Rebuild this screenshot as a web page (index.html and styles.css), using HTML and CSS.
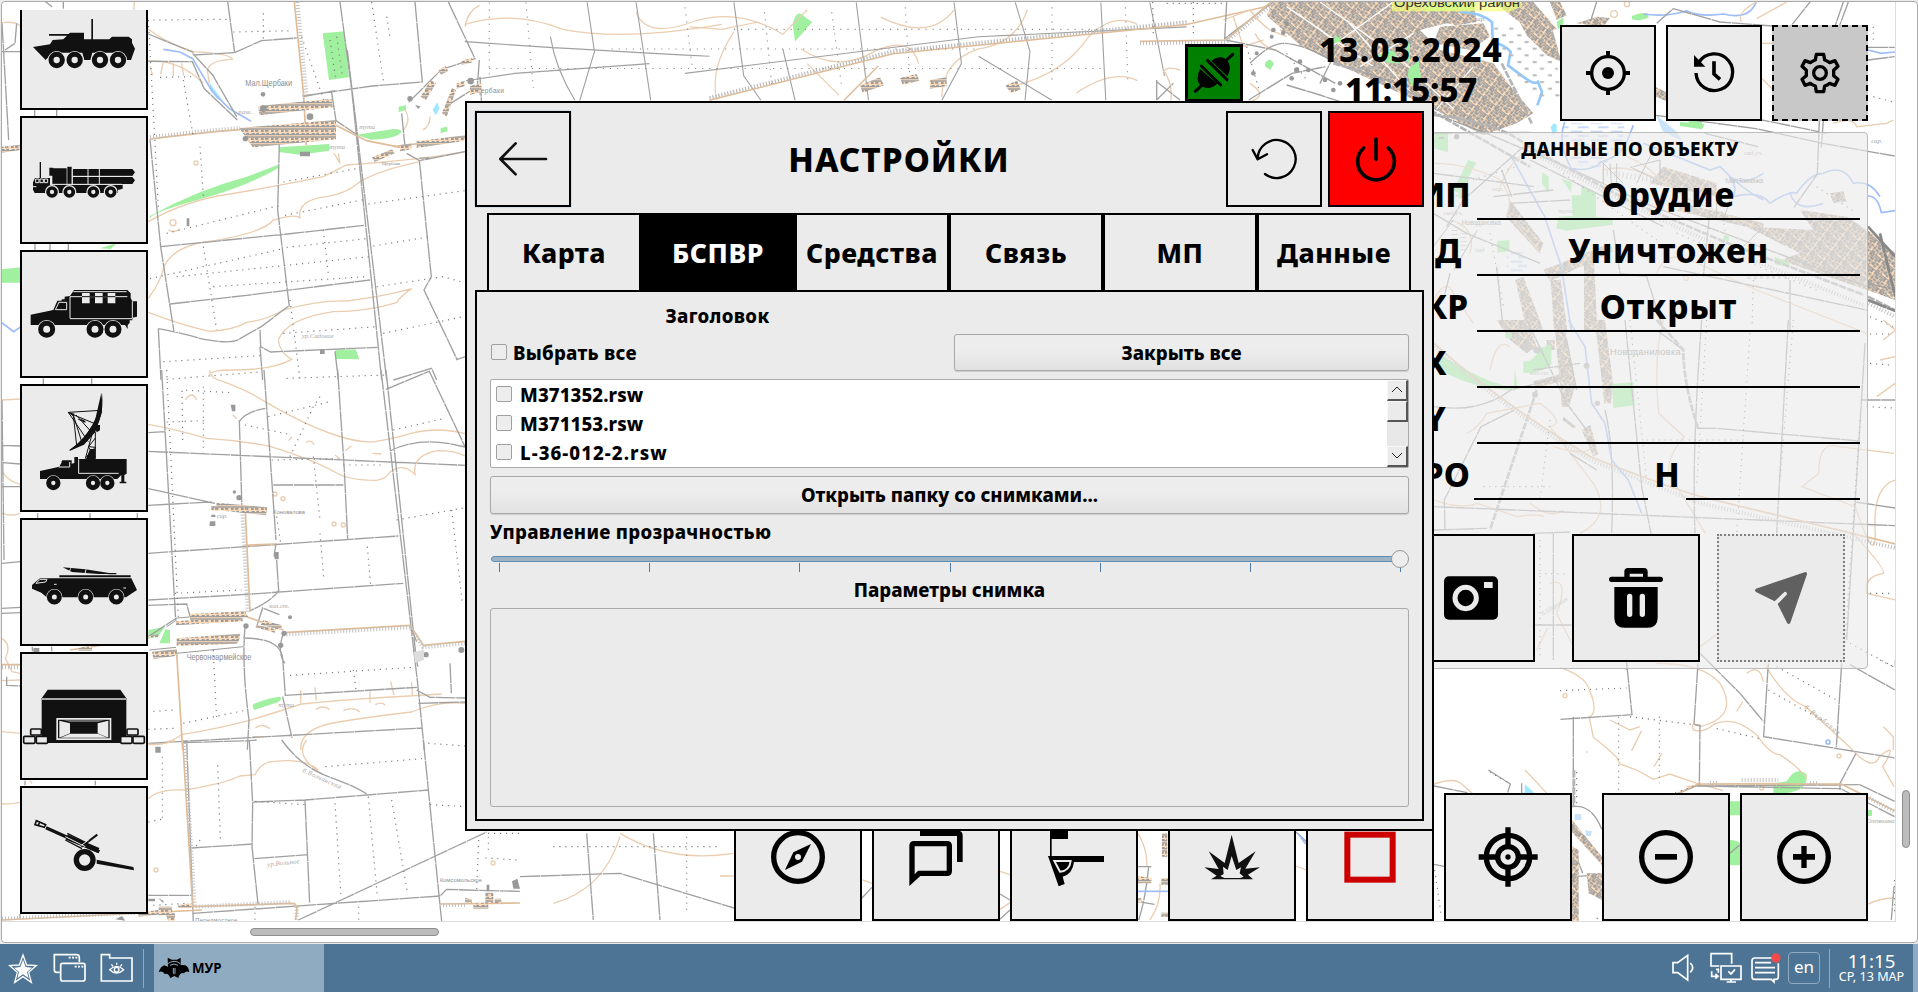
FILE: index.html
```html
<!DOCTYPE html>
<html lang="ru">
<head>
<meta charset="utf-8">
<title>МУР</title>
<link rel="stylesheet" href="styles.css">
</head>
<body>
<main class="window">
<div class="viewport">
<svg class="map" viewBox="0 0 1893 919" aria-hidden="true">
<defs>
<pattern id="houses" width="30" height="24" patternUnits="userSpaceOnUse"><rect width="30" height="24" fill="#ffddba"/><path d="M0 3h30M0 20h30" stroke="#a0a0a0" stroke-width="4"/><path d="M3 5h8v7h-8zM15 5h10v6h-10zM5 15h9v5h-9zM19 14h8v6h-8z" fill="#9b9b9b"/></pattern>
<pattern id="city" width="47" height="37" patternUnits="userSpaceOnUse" patternTransform="rotate(38)"><rect width="47" height="37" fill="#ffddba"/><path d="M2 3h9v9h-9zM13 2h5v9h-5zM20 4h13v6h-13zM4 14h6v5h-6zM12 13h11v7h-11zM26 12h9v6h-9zM2 20h7v9h-7zM11 22h11v7h-11zM25 21h9v10h-9zM10 8h6v5h-6zM36 2h8v12h-8zM37 17h9v7h-9zM36 26h7v8h-7zM3 31h12v5h-12zM19 31h4v6h-4z" fill="#9f9f9f"/><path d="M0 1h47M16 28h6M22 10v9M33 4v26" stroke="#a4a4a4" stroke-width="3"/></pattern>
<pattern id="marsh" width="60" height="26" patternUnits="userSpaceOnUse"><path d="M2 5h36M24 18h32" stroke="#c5d8f8" stroke-width="6"/></pattern>
<pattern id="orchard" width="46" height="40" patternUnits="userSpaceOnUse"><path d="M4 6h12M28 26h12" stroke="#bbb" stroke-width="7"/></pattern>
</defs>
<g transform="translate(-2 -2)">
<!-- north-west -->
<g transform="scale(.33333)">
<path class="wood" d="M968 100l65-6 14 138-60 8zM450 648Q590 570 740 530L835 494v10Q740 560 600 598T450 655zM838 442l150-10v20l-90 12-60-8zM1070 404l110-17q30 0 22 12-20 18-90 20zM1005 1051l62-3 11 30-70-1zM6 808l56-6v46H6zM1196 320l22-4v14l-22 6zM1322 384l20-4v14l-20 6zM300 745l50-16-18 18z"/>
<path class="water" d="M630 250l40 55-20-10-22-30zM1298 330l14-24 6 20-10 20z"/>
<path class="river" d="M490 148l50 8 38 20 30 50 30 50 50 50 65 38M1 965l40 30 22-15"/>
<path class="contour" d="M445 88Q500 130 580 155 690 160 697 178 630 180 622 210L628 250M445 182Q540 180 610 250M445 665Q560 600 690 582 850 555 970 530L1040 495Q1260 480 1395 455M445 895Q480 850 492 800 520 740 620 725 790 700 820 660 890 640 900 655 890 600 980 590 1040 580 1080 545 1140 510 1260 485M445 937Q560 980 630 994 700 990 740 967 800 960 850 930 960 900 1040 903 1150 890 1235 866 1200 890 1190 908 1100 935 1000 935 860 955 835 1020 840 1060 875 1078 820 1110 700 1110 630 1110 630 1125M403 6l-2 30M6 68q40-5 55 10M1395 80q10-50 44-64M450 200l8 26M490 188l-8 34M520 190v38M545 190l6 36M1002 460l18 30-5-30M1215 330q20 30-5 60M1290 350q0 30-22 40M505 690q20 10 35-3"/>
<circle class="contour" cx="588" cy="489" r="6"/><circle class="contour" cx="519" cy="668" r="9"/>
<path class="road" d="M683 6L704 158M580 165l124-7 80-36 106-8M445 102l135 55M445 184l132 1 35 80 100 95M578 160l60 65 72 125M1020 6l35 262 90 872M1042 150l118 990M1245 6l22 240-150 12-210 30M994 272l14 90 60 40M450 418l32 322 40 256M838 430l-5 200 35 290M482 740l380-38 230-26M510 912l230-26 370-46M475 986l8 154M475 986q80 15 120 28 90 20 120 5l70-40 80-60M780 990l2 50 30 16 320-14M780 1040l8 100M1005 1054l10 86M1258 480l36 350-22 40 100 210M1440 230l6 100M1345 6l80 170-100 32-100 100M1438 180l-6 80-80 50M1205 340l10 100M1258 475l30-2M1220 460l38 22L1395 455M1368 1080l28-10M1180 1140l115-35 15 35M6 155h55M6 70l20 350M130 0l26 20M190 0v26M104 330v20M170 330v20M105 730v20M150 730v20M205 730v20M130 1135v20M275 1135v20M50 70l-5 60-30 20M910 290l95-18"/>
<path class="track" d="M883 6l28 280M911 286l8 150M450 417q160-20 270-28M1000 372l100 50 100 20M1180 440l215-26"/>
<path class="ticks" d="M892 6l28 280M450 412q160-20 270-28"/>
<path class="dots" d="M460 60l220-2M700 96l180-4M480 232l100-2M550 240l30 170M790 40v90M1115 6l36 244M905 110l70 200M990 120l16 110M1010 110l16 110M445 60l30 560M600 440l10 150M850 546l230-42M855 646l240-48M500 700l340-84M610 740l40 250M970 690l16 140M450 836l400-90M860 742l240-26M530 830l580-60M640 860l460-30M1105 612l290-40M1120 738l170-28M1130 860l200-30 70 20M490 1085l290-18M870 900l30 240M850 1000l280-20M1150 1000l240-50M1160 50l10 60M860 1135l300-10"/>
<path fill="url(#houses)" d="M775 318l220-22 3 26-220 24zM718 384l290-24v58l-250 24zM1200 436l34-6v18l-34 6zM1250 424l145-18v16l-145 22zM1116 472l60-24 8 12-60 26zM1262 290l30-50 16 10-30 50zM1316 210l22-12 6 16-22 10zM1326 340l30-76 12 6-28 80zM1385 182l30-8v14l-30 6zM1370 250l24-8v16l-24 8zM6 440l55-6v16l-55 8z"/>
<g fill="#999"><circle cx="789" cy="283" r="7"/><circle cx="790" cy="326" r="10"/><circle cx="930" cy="350" r="10"/><circle cx="736" cy="416" r="8"/><circle cx="1230" cy="296" r="8"/><circle cx="1412" cy="243" r="10"/><path d="M1245 315l10 12 6-8M560 655h8v24h-8zM960 1048h14v14h-14zM900 455h30v14h-30z"/></g>
<text x="736" y="258" class="town" textLength="140" font-size="27" lengthAdjust="spacingAndGlyphs">Мал.Щербаки</text><text x="715" y="342" class="note">разв.</text><text x="1078" y="387" class="note">тута</text><text x="988" y="446" class="note">тута</text><text x="905" y="1013" class="note" textLength="97">ур.Садовое</text><text x="1146" y="494" class="town" font-size="13">Щербаки</text><text x="1422" y="279" class="town" font-size="20" textLength="90">Щербаки</text>
</g>
<!-- west -->
<g transform="translate(0 370) scale(.33333)">
<path class="wood" d="M445 780l50-10-20 28-30 8zM478 820l18-42 14 2v40zM760 1002q50-20 80-22 8 6-5 16l-72 24q-8-10-3-18z"/>
<path class="contour" d="M630 0q-5 22 40 35 80 30 125 60 120 70 210 100 70 24 120 20 60-10 105-24 80-22 165 0M445 163q80 14 175 42 100 6 190 24 130 40 200 80 40 22 120 22 30-5 40-25 40-30 75 8-10-60 70-72 50 0 80 16M6 90l55-3M6 305q20 30 55 38M6 430q30 10 55 0M6 805q30 20 10 60l20 40 25 5M6 932l55-2M6 1085l55 5M445 1124q60 0 100-30 120-20 200-42 80-24 160-50 100-10 220-18l200-12M1395 1000q-80-8-160 26-130 15-220 30-120 20-112 84M556 90q20-30 34 0M698 134l12 12M866 212l10-12M918 218q14-12 24 6M1036 242l18-14M1005 255l16 12M1118 250l26 2M902 960v40M945 952l4 40M1110 964v34M1172 935l10 40M1235 936l2 40M948 1018q20-14 40 0M1030 1022q30-14 50 4M1126 1004q20-10 30 2M766 1074q20-16 44 2M758 1100h34"/>
<circle class="contour" cx="825" cy="372" r="6"/><circle class="contour" cx="849" cy="386" r="6"/><circle class="contour" cx="1002" cy="462" r="6"/><circle class="contour" cx="1030" cy="465" r="6"/>
<path class="road" d="M485 0l42 750M718 150l8 270M792 0l36 510M718 155q20-30 78-40M1013 0l20 300 10 206M1143 0l110 940 20 200M1158 0l90 860M445 188l50-3M445 244l950 42M445 356l200 44M445 406l190-10M445 550l750-52M445 690l280-16 485-34M445 706l115-4 10 36M820 345h210M828 520l-6 40M830 570l6 92q-20 30-85 60M1158 58l130-54L1395 230M1170 243q80-40 180-22l45 10M735 770q-10 120 12 280l-5 90M730 804q110 0 118 60l8 112 395-24M848 980l28 124M850 790q-20 60 5 90M445 1120l820-46M770 770l18-56 50 20M1230 765l20 50M1240 840l14 50M1350 880l4 90M1250 960l40 22 105 2M1255 1000l140-4M6 226l55 2M6 278l55 4M6 350l55 0M6 580l55-5M6 715l55-3M6 730l55-2M20 920v26l40 2M113 430v14M270 430v14M412 430v14M97 830v14M155 830v14M6 90l6 480M445 800l85-56"/>
<path class="track" d="M736 425l14 300M736 526l90-4M850 788l380-22 40 60 125-12M530 850l18 290M740 740l110 40M6 884h55M210 840l235-36"/>
<path class="ticks" d="M727 425l16 300M850 794l380-22 40 60 125-12M6 892h55"/>
<path class="thin" d="M530 744l200-16M500 770l30-20M530 850l200-20M448 840l80-8"/>
<path class="dots" d="M500 28l280-22M500 156l120-4M548 210l-2-150 150 8M610 50v200M805 140l180-44M870 260l70-150 20-30M735 165l140 30M940 260l20 190M830 440l12 80M1030 285l120 0M1180 180l150-34M960 490l12 140M1102 530l10 120M1355 420l32 280M1190 450l200-36M525 670l200-10M640 840l10 210M870 916l370-24M1060 900l8 60M460 1024l60-4M550 1060l190-40M445 1078l80-3M815 270l200-4M500 0l35 740"/>
<path fill="url(#houses)" d="M650 398l152 14-4 24-150-16zM634 408h20v14h-20zM570 732l165-8 10 18-175 8zM528 754l200-14v14l-200 12zM530 805l190-14v16l-10 14-180 6zM790 750l56 16-4 14-60-16zM770 764l58 14-4 10-58-16zM456 845l75-8v20l-70 10zM236 834l40-8v16h-40zM445 798l30-6v10h-30z"/>
<g fill="#999"><circle cx="717" cy="383" r="8"/><circle cx="703" cy="366" r="5"/><circle cx="738" cy="768" r="8"/><circle cx="852" cy="790" r="8"/><circle cx="842" cy="826" r="8"/><circle cx="870" cy="742" r="6"/><circle cx="1278" cy="854" r="8"/><circle cx="1384" cy="840" r="9"/><path d="M692 104h14v20h-10zM634 434h12v7h-12zM630 454h16v14h-18zM822 546h14v22h-12zM100 834h18v12h-18z"/><path fill="#ddd" d="M1242 845l30-5v30l-28 10z"/></g>
<text x="820" y="431" class="town" font-size="17" textLength="95">Коновалова</text><text x="560" y="869" class="town" textLength="194" font-size="27" lengthAdjust="spacingAndGlyphs">Червоноармейское</text><text x="650" y="445" class="note">сар.</text><text x="808" y="713" class="note">кол.ст.</text><text x="835" y="1010" class="note">тута</text>
</g>
<!-- south-west -->
<g transform="translate(0 740) scale(.33333)">
<path class="contour" d="M6 192q40 0 55-6M445 176q30-30 110-26 120-20 165-42l45-4q20-40 60-40 90-10 130 26M920 0q-40 50 50 104M90 122l6 8M445 12q30 6 80-10"/>
<path class="road" d="M548 8l200-6 22-2M748 0l10 190-2 130 18 172M845 0q50 70 125 104 100 36 130 58M1270 0l55 545M760 186l155-6 370-30M915 180l14 310M763 356l160-12M575 324l185-12M895 540L1460 276M580 520l740-52 20-20 60 2 160 4M560 0l20 545M445 466h130M60 522v14M286 122v14M75 122v14"/>
<path class="track" d="M548 0l30 500 300-10q20 0 8 50M6 540l600-30M1320 492l240-3"/>
<path class="ticks" d="M554 0l30 500 290-14M6 536l400-18M1320 496l80-2M890 500v40"/>
<path class="dots" d="M487 50v190M445 246l40-8M653 76l8 220M600 300l-12 20M1005 190l18 280M1105 170l26 290M1175 180l46 270M976 80l290-24M1285 10l110 8M1290 194l110 6M766 184l150 10M1465 290v50M1436 300l-6 150M1456 354l100 6M1464 280h96M1076 500v40M765 500v40M460 496l100-6"/>
<path fill="url(#houses)" d="M415 518l60-8v14l-60 6zM476 500h40v26h-40zM535 494l40-4v14h-40zM495 520h30v22h-20zM1395 474l20 4v12l-20-4zM1420 490h45v16h-45zM1456 458h24v30h-24zM1484 476h20v14h-20z"/>
<circle class="contour" cx="468" cy="390" r="6"/><circle class="contour" cx="1479" cy="369" r="6"/>
<path fill="#999" d="M466 20h16v18h-16zM445 476h20v8h-20zM474 474l16 8v8zM1536 424l16-8 8 30h-20zM1460 434h8v20h-8zM346 538l20-10 10 14z"/>
<text class="note" transform="translate(906 96) rotate(24)" textLength="125">б.Волчанская</text><text class="note" transform="translate(802 380) rotate(-6)" textLength="98">ур.Вольное</text><text x="1320" y="425" class="town" font-size="17" textLength="126">Комсомольское</text><text x="586" y="547" class="town" font-size="17" textLength="126">Передмостное</text>
</g>
<!-- north -->
<g transform="scale(1.2232)">
<path class="wood" d="M648 20q3-14 10-6l6 4-14 16zM386 86l10 2-2 6-8-2z"/>
<path class="c2" d="M380 20q40-12 80 4 50 10 130-4M520 10q8 20 40 10 40-16 80 8l20-20M600 26q-20 30-14 56M655 40q30 20 60 2 30-14 36 10M660 52l26 26M720 14q40 20 60-6M770 80q0-30 30-40 30-4 40-32M830 70q40-10 60-40 20-20 40-10M880 76q30-20 50-10M620 18l-30 6-26-2"/>
<path class="r2" d="M380 34q80 6 200 12M480 2l6 40-12 40M520 2l12 80M600 2l8 60 14 20M640 40l10 42M700 2l10 80M780 2l6 50-16 30M830 2l12 40-4 40M900 2l4 80M940 2l12 60M560 60l240-30 170-8M450 30q4 26 20 52M800 46l60 36M381 66l40-6 110-8"/>
<path class="t2" d="M580 82L730 44l240-24 80-18M690 82l28-28"/>
<path class="k2" d="M580 80L730 42l240-24"/>
<path class="d2" d="M400 2v60M430 2l6 70M560 6l6 50M625 10l6 60M680 10l8 60M740 6l4 60M860 6v60M920 6l2 60M500 40h300M400 56h500M600 24h300"/>
</g>
<path fill="url(#houses)" transform="scale(.33333)" d="M2580 256l60-24 12 24-64 22zM2700 234l50-12 8 20-50 12zM2790 240l50-8v26l-50 8zM3016 256l36-14 10 26-30 12zM1410 258l34-8v26l-34 8z"/>
<!-- north-east town -->
<g transform="translate(1140 0) scale(.33333)">
<path fill="url(#city)" d="M400 6H1000l10 60-60 10-30-6-80 20 60 60 160 40 60 80 60 70-50 30-100 36-150-80-280-130-120-60-100-90z"/>
<path fill="url(#city)" d="M1060 6h120l70 80-40 20-60-30-50-40zM900 80l130-10 20 40-60 40-110-20z"/>
<path fill="none" stroke="#fff" stroke-width="4" d="M540 6l240 170 160 150M440 20l260 180M620 60l300 340M1000 200l-130 150M820 100l-160 100M760 6l-180 130"/>
<path class="wood" d="M586 104l24 20-30 6zM806 206l30-24 8 60-30 16-10-30zM710 165l50-14 20 40-40-4zM376 188q14-20 26 4l-12 18-16-12zM800 128l10 4v60l-10-10zM884 400h40v56l-40-10zM985 480l24 8-50 90-20-6z"/>
<path fill="#a0f0a0" d="M840 18l160-12v24l-140 4z"/>
<path class="contour" d="M70 216q10-20 50-6M250 60l80-30q30 40 60 60l50 20M280 50l30 90 60-20M345 100q20 40 60 50M70 210q30 40 22 100M330 250q60 40-4 56M410 70l40 10M420 90l30 6"/>
<path class="road" d="M260 6l-6 110L400 6M256 120l150 30 180 100M330 190q60-60 100-60 60 0 160 60l180 60 120 80M50 240v60l50-50M50 245L120 300M326 300l130-80 100-20M440 255l100 30 60 20M540 250l50-100M880 400l290-3"/>
<path class="road wide" d="M580 190l70 20 60-10M870 330l300 170"/>
<path class="track" d="M0 124l258-4L400 0"/><path class="ticks" d="M0 130l258-4L404 6"/>
<path class="river main" d="M960 36q60 0 96 30l2 60q40 10 54 30l-8 40 40 30q40 30 50 20l12 30-14 40"/>
<path fill="url(#orchard)" d="M1060 80h130l110 220h-110l-80-100z"/>
<g fill="#999"><circle cx="400" cy="90" r="7"/><circle cx="430" cy="98" r="7"/><circle cx="395" cy="110" r="6"/><circle cx="440" cy="72" r="7"/><circle cx="480" cy="185" r="7"/><circle cx="470" cy="210" r="8"/><circle cx="505" cy="210" r="7"/><circle cx="455" cy="235" r="7"/><circle cx="350" cy="160" r="6"/><circle cx="340" cy="220" r="7"/><circle cx="580" cy="270" r="7"/><circle cx="600" cy="250" r="7"/><circle cx="555" cy="240" r="7"/><circle cx="905" cy="420" r="10"/><circle cx="950" cy="410" r="8"/></g>
<path class="dots" d="M38 6l2 100M160 6v100M80 10h180M320 140l40 140M440 160l60 80"/>
<rect x="756" y="0" width="390" height="34" fill="#f4ff7a" opacity=".7"/><text x="762" y="20" font-size="40" class="district" textLength="378" lengthAdjust="spacingAndGlyphs">Ореховский район</text>
</g>
<g transform="translate(1430 0) scale(.33333)">
<path fill="url(#city)" d="M250 30l60-24 60 90 24 90-44-20-60-60zM360 6h30l20 40-30 14zM440 70l60-20 40 4-20 26zM678 262l120 56-4 22-116-50zM1312 690l84 70v140l-84-30zM700 500l160 50v40l-200-40zM1110 630l140 20 60 40v180l-260-90 60-20-160-80 200 10zM1200 580l40-6 10 30-40 6zM256 840l24-10 60 160h-50zM340 810l200-80 10 24-190 90zM462 780h30l10 210h-40zM362 840h30l20 150h-40zM240 600l100 130-12 30-100-110zM760 610l240 60v22l-260-60z"/>
<path class="wood" d="M606 48q50-20 50 4-20 14-50 6zM380 66l20-14v20l-16 16zM750 366l74 6-8 16-66-10zM336 516l20 14v50l-20-30zM394 536l30 10v40h30v-30l44 20v74l50 4v20l-140 18-30-8 10-34 40-2-4-70zM202 724l36-4v34l-36 4zM1034 770l44 18v14l-44-10zM110 490l24-4-40 110-12-6zM12 416h36v36l-36-10zM776 362h40v18h-40zM880 708h16v14h-16z"/>
<path class="water pale" d="M678 344l60 50 20 30-60-30z"/><path class="water" d="M362 380l10-10 8 4v20l-12 12z"/>
<path fill="url(#marsh)" d="M404 370h180l-10 90-80 50-70-20-30-60zM230 755h60v60h-60z"/>
<path class="river" d="M404 366q-24 60 20 140 60 10 90-20 60-20 76-60l20-50M640 430q100 40 200 80l30-10q60 50 40 90 80-20 110 20 60-40 80-30 40-60 80-60 60-30 90 30 50-10 80 40M880 510q60 60 120 90M1000 520q-60 40-100 10M640 42q70 10 130-10 40 20 110 10 80 20 100-40M1314 150l40 10 42-4M1080 580q20 60 100 30M244 470l100 180 50 150 30 190M1314 588q30 0 40 50l42-6"/>
<path class="contour" d="M980 6q-60 30-46 60M1070 6l-90 50M996 130h60M996 236l40 40M1210 370q60-20 70 10l90-10 20-10M12 490q100 0 200 50 40 60 20 100l100 120M520 510q100-30 260 90l200 80M680 820q30-70 100-40l200 90 330 130M10 900q40-70 60-20l60 90M590 470q60 20 120 90M60 660q80 20 60 100M210 560q30-70 60-90"/>
<circle class="contour" cx="552" cy="42" r="10"/><circle class="contour" cx="591" cy="12" r="8"/><circle class="contour" cx="768" cy="834" r="7"/>
<path class="road" d="M680 70l50-44 140 40 210 16 60-76M1255 6l-26 70M1240 6l-24 70M1314 142h80M1314 180l80-10M678 346l300 40 200 44 216 38M824 400l160 40M1168 362l-6 160-70 100M1180 362l-6 80M10 340l160 60 260 110 240 110 240 90 400 150M10 640l100 60 220 90M12 520l300 40M370 570l-180 20M50 680l50-80 180-160M215 510l30 80M550 690l20 130 80 10 50 160M840 630l-20 200M1080 840v150M60 820l-20 80M200 800l20 190M700 800l610 130M300 480l400 200M420 600l-180 10M520 490v60M690 480v60M500 6l-16 50M900 340l290 60M1314 850l80 20"/>
<path class="road wide" d="M12 345q200 20 290 100l300 160 280 120 420 160M1314 890l80 40M215 190q70 140 90 180"/>
<path class="road dark" d="M1314 900l84 34M1314 680l82 90M1350 700l46 190"/>
<path class="ticks" d="M300 455l300 160 280 130 420 170M1316 910l80 40"/>
<path class="thin" d="M520 490l60 60M600 500l80 40M690 480l-80 20M540 490l4 60M560 490v60M620 550l50-100M10 740l60-80M72 810l70-120M860 590v60M900 600l-20 60M1000 680l-60 60"/>
<path class="dots" d="M970 840l-4 140M1160 560l120 80M870 600l20 120M1330 290l60 16M1330 80v40M400 520l280 200M560 300h100M60 560l200-60M60 580l60 20M1320 950l70 30M740 700l420 170M180 700l40 220"/>
<path fill="none" stroke="#c4c4c4" stroke-width="18" stroke-dasharray="3 9" d="M530 520l160 20M74 690v60M100 700v60"/>
<text x="942" y="465" class="note">сад.уч.</text><text x="886" y="549" class="town" font-size="22" textLength="114">Мал.Токмачка</text><text x="385" y="640" class="note">тута</text><text x="95" y="675" class="town" font-size="20" textLength="118">Новодановка</text><text x="42" y="645" class="note">сад.уч.</text><text x="187" y="574" class="note">сар.</text><text x="1324" y="430" class="note">сар.</text><text x="950" y="836" class="town" font-size="15" textLength="120">Орловка</text><text x="135" y="756" class="note">сад</text><text x="132" y="62" class="note">пар.</text>
</g>
<!-- east -->
<g transform="translate(1400 320) scale(.33333)">
<path fill="url(#city)" d="M290 0h90l30 80-30 20-50-40zM462 0h28l36 200-20 60h-20zM555 0h60l24 190-6 60h-20l-26-230zM440 60h24v30h-24zM400 184l94-24 4 20-90 24zM545 330l26-16 24 90-16 4zM490 290l38 30-6 6-34-26z"/>
<path class="wood" d="M102 120l30-10q80 50 140 74l70 22 4 6q-140-10-220-60zM370 124q30 4 50-40l34-10v60q-40 30-84 24zM344 140l8 60-10 4zM636 192l64-6 4 70-64 8zM316 40h20v14h-20z"/>
<path class="contour" d="M790 0q-30 100-14 280l76 70q-50 60-46 110 80 130 110 180M102 540q80 30 130 10l120 40q60-10 80 0M200 340q40-20 60-60l160-30q80 60 30 70l130 170q60 100-40 150M270 150q20-100 60-70M460 380q100 30 120 0M450 790q60-20 20 90l60 120M1486 480q-70 20-60 160 0 100-60-80l-160-60 50-40q0-100 60-80l166 20M1360 640q100 110 90 120-60 10-50 60l86 20M1450 60l36-30M1430 230l56-40M1450 0l36 30M900 980l80-60M1440 120l46-10M410 990q40-80 30-60M390 550q60 50 100 20"/>
<path class="road" d="M675 0l50 500 40 200M905 0q-30 400-20 640M1165 0l-35 640M1395 70L1340 960M380 0l120 250 60 80M102 260q140 20 230-50l160-40M460 0l40 60 30 150M102 560l1384 57M890 325l60 0 430 38M1365 546l120 18M1382 240h104M615 270q30 120 20 370M510 400l80 50M102 630l160-5M400 640l110-4M460 640v380M135 630l-2-90 110-220 100-50M400 150l140-20M770 30l80 60M680 1050v-30M900 1000l50 50M405 915h110M1486 1020v20"/>
<path class="road wide" d="M770 0l80 90q0 100 44 234M410 210q-60 180-140 420"/>
<path class="track" d="M102 70q200 180 470 340 200 80 330 120l584 142"/><path class="ticks" d="M102 80q200 180 470 340 200 80 330 130l584 134"/>
<path class="river" d="M505 0l50 80 20 170 40 60 20 110 50 60 40 100"/>
<path class="dots" d="M690 0l50 480M1050 40l-40 600M920 0l-30 500M1180 0l-40 480M450 300l-30 240M250 500l200 0M1410 130l70 6M1400 260l80 4M1380 300l-46 680M1140 700l10 300M740 360l300 0M420 660v360M400 760l100 2M950 790v60M1410 820h70M1350 970l130 70M1410 42h70"/>
<g fill="#b0b0b0"><circle cx="374" cy="80" r="12"/><circle cx="410" cy="90" r="10"/><circle cx="592" cy="250" r="8"/><circle cx="560" cy="137" r="9"/><circle cx="405" cy="224" r="9"/></g>
<text x="630" y="106" class="town" font-size="28" textLength="212">Новоданиловка</text><text class="note" transform="translate(428 888) rotate(-32)" textLength="90">б.Широкая</text><text x="390" y="166" class="note">кол.ст.</text>
</g>
<!-- south-east -->
<g transform="translate(1560 660) scale(.33333)">
<path class="wood" d="M640 400v-30l40-6q30-50 60-20 6 50-70 56zM510 424h30v42h-30zM510 540q20 0 30 10v66h-30zM924 450h12v18h-12z"/>
<path class="contour" d="M0 22q60 20 80 50 40 80 8 100l12 60q40 30 70 60l10 20 50 18 50 28 50-16 80 28 80 22M290 10q140 0 190 60 60 100-60 130-30-20-20 10 30 10 60-16 60-30 130 30 40 60 70 60 60 40 80 72M380 380q70-10 250-10l210 6M560 40q40-30 50 26M618 20q60 100 120 120l130 120q70 80 90 30 60-50 10 30l34 60M530 154l18-28M282 320l24-40M970 200l30 30v40M920 734q40-20 80-20M150 180l60 30 30-10M245 212l-30 60"/>
<circle class="contour" cx="15" cy="107" r="6"/><circle class="contour" cx="837" cy="288" r="6"/><circle class="contour" cx="605" cy="384" r="6"/>
<path class="road" d="M200 10l16 154L0 178M414 10l-12 184 18 2-2 180M625 10l-14 220 395 64M440 0l100 100 70 84M845 10l-16 252M870 14l135 76M40 170v270M412 378l430 8 162 84M345 404l64-26 490-4 105 50M888 280l-48 90v20M1002 680l-8 100M510 580l28-24M36 440q60-10 90 70M38 560l30 80M38 650l80-5"/>
<path class="track" d="M350 402l64-30 430 0 160 80"/><path class="ticks" d="M545 360h110M750 370h25M450 369h25M920 410l84 46"/>
<path class="dots" d="M0 92l200-8M176 170v220M298 170v200M210 170l190 24M470 206l130 30M80 276h2M625 90l160 90M650 20l180 100M1004 660v100M110 775h10M400 380l-60 20M960 0l40 20"/>
<path fill="url(#city)" d="M36 480l90 110v26l-90-100zM80 640h46v80l-40-20zM36 560l20 10v212h-20z"/>
<path class="water pale" d="M44 462h20v18h-20zM76 510l20 4-4 14h-14z"/><circle cx="804" cy="246" r="6" class="river"/>
<text class="note" transform="translate(732 144) rotate(38)" font-size="22" textLength="130">б.Вербовая</text><text x="920" y="490" class="note" textLength="84">Оленковка</text>
</g>
<g transform="translate(1160 770) scale(.33333)">
<path class="contour" d="M822 42q60-20 80-2l40 34M1095 0l66 70M408 288l30 12"/><path class="road" d="M822 48l100 20M985 0l66 42-8 26M1085 40v30M822 283l30 6M408 186l30 28"/><path class="water" d="M1094 42l30 28h-30z"/><path class="river" d="M415 192l22 30"/><path class="dots" d="M824 300l20 140M990 6l60 36M1250 6v100"/><path class="road wide" d="M1242 0v110"/>
</g>
<g transform="translate(720 770) scale(.33333)">
<path class="contour" d="M-300 190q150 90 340 60M-500 400q150-40 200-200M0 318h42M428 330l28 10M840 304l30 10M840 418l30-20M1254 190q30 50 26 100M1320 340q4 60-30 110"/><path class="road" d="M-600 320l300-10 342 104M-400 190l20 260M-200 190l20 260M426 384l30-32M840 372l30 18M840 448l30-28M1256 450q20-60 30-160M1254 395l50 8M1254 290h40"/><path fill="url(#houses)" d="M1254 318l40 6v16h-40zM1324 324h20v20h-20zM1324 428h20v12h-20zM1254 384h10v14h-10zM1326 190h16v70h-16z"/><path class="river" d="M1254 364h90"/><path class="dots" d="M-500 230h500M-100 200v230"/>
</g>
</g>
</svg>

<aside class="units">
<button class="tile"><svg viewBox="66 -48 372 372"><path d="M99 141l51-8 8-13 32-2 20-20h42v20h76l8-8h50l10 8v10l9 18-12 34h-16l-20-22h-80l-6 22h-18l-6-22h-90l-20 22zM147 102h60v5h-60zM274 57h5v62h-5z"/><g class="wheels"><circle cx="170" cy="180" r="21"/><circle cx="224" cy="180" r="21"/><circle cx="300" cy="180" r="21"/><circle cx="354" cy="180" r="21"/></g><g class="rims"><circle cx="170" cy="180" r="17"/><circle cx="224" cy="180" r="17"/><circle cx="300" cy="180" r="17"/><circle cx="354" cy="180" r="17"/></g></svg></button>
<button class="tile"><svg viewBox="66 354 372 372"><path d="M157 505h43v48h-43zM148 503h12v24h-12zM202 500h13v53h-13zM217 507h180l8 10-8 11H217zM217 531h180l8 10-8 11H217zM105 534h45v20h218v12l-14 4v9H104l-5-10v-22zM119 486h4v48h-4z"/><path class="cut" d="M107 548v-11h10v11zM120 548v-11h10v11zM133 548v-11h10v11zM99 560h10M217 529h180M264 507v45M298 507v45M217 507v46M150 553h216"/><g class="wheels"><circle cx="156" cy="576" r="15"/><circle cx="208" cy="576" r="15"/><circle cx="280" cy="576" r="15"/><circle cx="332" cy="576" r="15"/></g><g class="rims small"><circle cx="156" cy="576" r="12"/><circle cx="208" cy="576" r="12"/><circle cx="280" cy="576" r="12"/><circle cx="332" cy="576" r="12"/></g></svg></button>
<button class="tile"><svg viewBox="66 756 372 372"><path d="M92 944l68-14 12-28h12l2-4h8v-8l16-2 12-18h160l10 10v14l5 10h14v46l-14 3v8h-8v8l-6 6v12l-8-12H92z"/><path class="cut" d="M176 907h24v22h-34l8-16zM210 955V890h172M210 956h186M397 904v50M220 875h160"/><path fill="#ebebeb" d="M246 879h23v31h-23zM285 879h23v31h-23zM323 879h23v31h-23z"/><path stroke="#111" stroke-width="3" d="M246 890h100"/><g class="wheels"><circle cx="140" cy="988" r="22"/><circle cx="285" cy="988" r="22"/><circle cx="339" cy="988" r="22"/></g><g class="rims"><circle cx="140" cy="988" r="18"/><circle cx="285" cy="988" r="18"/><circle cx="339" cy="988" r="18"/></g></svg></button>
<button class="tile"><svg viewBox="66 48 372 372"><path d="M120 303l55-12 12-20h28v10l8-2v-18h11v6h24l12-30h16v30h94v44l-7 4v20h6v5h-20v-5h5v-20l-12 12H120zM306 68q10 90-50 150l-48 24q90-70 98-174zM282 165h18v16l-10 6z"/><path class="cut" d="M184 276l-8 15h33v-15M236 268v42h120"/><g fill="none" stroke="#111" stroke-width="3"><path d="M205 127l99-6M205 127l60 88M220 135l10 92M220 135l25 80M228 135l50 55M222 135l72 30M256 266l22-80M286 266v-80M258 262l28-30-20-2 20-26M286 262l-20-30M205 128l18 8M235 148l22 8"/></g><path d="M304 68l-20 88-34 52-42 32 2 2 42-18 34-38 20-60zM204 126l20 5-5 8zM240 145l16 8-4 6z"/><g class="wheels"><circle cx="160" cy="339" r="17"/><circle cx="279" cy="339" r="17"/><circle cx="322" cy="339" r="17"/></g><g class="rims"><circle cx="160" cy="339" r="14"/><circle cx="279" cy="339" r="14"/><circle cx="322" cy="339" r="14"/></g></svg></button>
<button class="tile"><svg viewBox="66 450 372 372"><path d="M96 645l24-20h274l17 35-33 22H140l-16-14-28-12zM178 616h214v6H178zM188 592l68 6 90 14h-50l-80-6zM325 609h24v4h-24z"/><path class="cut" d="M108 640l12-12h21l-4 8zM212 595l-4 10M258 598l-3 14M162 643h8M370 654h8"/><g class="wheels"><circle cx="163" cy="681" r="18"/><circle cx="257" cy="681" r="18"/><circle cx="349" cy="681" r="18"/></g><g class="rims"><circle cx="163" cy="681" r="15"/><circle cx="257" cy="681" r="15"/><circle cx="349" cy="681" r="15"/></g></svg></button>
<button class="tile"><svg viewBox="66 852 372 372"><path d="M143 959h218l18 26v134H125V985z"/><path fill="#aaa" d="M125 984h254v6H125z"/><path fill="#ebebeb" d="M169 1044h165v66H169z"/><path d="M174 1049h155v56H174z"/><path fill="#ebebeb" d="M178 1052l32 8v30l-32 13zM325 1052l-32 8v30l32 13zM182 1103l28-12h84l28 12z"/><path fill="#666" d="M190 1050h124l-20 6h-84z"/><g fill="#ebebeb" stroke="#111" stroke-width="5"><rect x="92" y="1077" width="32" height="18" rx="3"/><rect x="71" y="1099" width="34" height="21" rx="3"/><rect x="109" y="1099" width="34" height="21" rx="3"/><rect x="381" y="1077" width="33" height="18" rx="3"/><rect x="362" y="1099" width="34" height="21" rx="3"/><rect x="399" y="1099" width="34" height="21" rx="3"/></g></svg></button>
<button class="tile"><svg viewBox="66 144 372 372"><g fill="none" stroke="#111"><path stroke-width="10" d="M138 263l160 72"/><path stroke-width="16" d="M200 291l95 40"/><path stroke-width="4" d="M202 280l60 30M196 300l50 26"/><path stroke-width="6" d="M244 320l48-36"/><path stroke-width="5" d="M109 242l-4 12 28 8 4-8zM119 246l-4 10"/></g><path stroke="#ebebeb" stroke-width="3" fill="none" d="M196 290l60 30M244 316l24-18"/><path d="M290 359l110 22 2 10-112-20z"/><circle cx="254" cy="360" r="25" fill="#ebebeb" stroke="#111" stroke-width="16"/></svg></button>
</aside>

<div class="status"><div class="link"><svg viewBox="144 141 156 156"><g stroke="#000" stroke-width="9" fill="none" stroke-linecap="round"><path d="M166 274l30-28M278 163l-30 28M184 198l58 57M203 182l58 57"/></g><path d="M180 207q-16 34 2 50 26 16 50-6zM214 183q26-20 46-4 18 22 2 50z"/></svg></div><div class="clock"><span class="clock-date">13.03.2024</span><span class="clock-time">11:15:57</span></div></div>

<nav class="tools">
<button class="tool"><svg viewBox="396 81 276 276"><circle cx="534" cy="219" r="49" fill="none" stroke="#000" stroke-width="10"/><circle cx="534" cy="219" r="18"/><path d="M528 153h12v16h-12zM528 269h12v16h-12zM468 213h16v12h-16zM584 213h16v12h-16z"/></svg></button>
<button class="tool"><svg viewBox="714 81 276 276"><path d="M806 188A55 55 0 1 1 798 219" fill="none" stroke="#000" stroke-width="10"/><path d="M792 165l34 35h-34z"/><path d="M852 184v38l18 16" fill="none" stroke="#000" stroke-width="11"/></svg></button>
<button class="tool tool-active"><svg viewBox="1032 81 276 276"><g fill="none" stroke="#000" stroke-width="10" stroke-linejoin="round"><circle cx="1170" cy="219" r="19"/><path d="M1159 163h22l3 17q8 3 15 8l16-6 9 17-13 12v16l13 11-9 18-16-6q-7 6-15 8l-3 17h-22l-3-17q-8-3-15-8l-16 6-9-18 13-11v-16l-13-12 9-17 16 6q7-5 15-8z"/></g></svg></button>
</nav>

<section class="object">
<h2>ДАННЫЕ ПО ОБЪЕКТУ</h2>
<dl>
<dt>ТИП</dt><dd>Орудие</dd>
<dt>ИД</dt><dd>Уничтожен</dd>
<dt>УКР</dt><dd>Открыт</dd>
<dt>X</dt><dd></dd>
<dt>Y</dt><dd></dd>
</dl>
<div class="pair"><span class="lbl">ПРО</span><span class="field"></span><span class="mid">H</span><span class="field"></span></div>
<div class="actions">
<button class="tile"><svg viewBox="27 648 372 372"><rect x="132" y="769" width="162" height="130" rx="15"/><rect x="252" y="786" width="26" height="18" fill="#ebebeb"/><circle cx="197" cy="834" r="32" fill="#000" stroke="#ebebeb" stroke-width="15"/></svg></button>
<button class="tile"><svg viewBox="522 648 372 372"><path d="M635 770h38v-15q0-11 11-11h48q11 0 11 11v15h38q8 0 8 8t-8 8H635q-8 0-8-8t8-8zm54 0h40v-9h-40zM643 801h130v92q0 30-30 30h-70q-30 0-30-30z" fill-rule="evenodd"/><path stroke="#ebebeb" stroke-width="16" stroke-linecap="round" d="M689 829v54M727 829v54"/></svg></button>
<button class="tile tile-off"><svg viewBox="957 648 372 372"><path fill="#606060" d="M1216 756q6 0 5 7l-50 145q-5 8-10 0l-28-56 27-28q3-8-6-9l-30 29-56-28q-6-5 0-10z"/></svg></button>
</div>
</section>

<div class="bottom">
<button class="tile"><svg viewBox="48 75 372 372"><circle cx="234" cy="261" r="73" fill="none" stroke="#000" stroke-width="16"/><path d="M273 222l-27 53-51 25 25-53z"/><circle cx="234" cy="261" r="9" fill="#ebebeb"/></svg></button>
<button class="tile"><svg viewBox="462 75 372 372"><path fill-rule="evenodd" d="M582 213h99q15 0 15 15v75q0 15-15 15h-80l-33 30V228q0-15 14-15zm2 16v84l10-11h86v-73z"/><path d="M600 182h114q14 0 14 14v80h-17v-78H600z"/></svg></button>
<button class="tile"><svg viewBox="876 75 372 372"><path d="M990 150h54v57h-49v51h157v18h-90q-4 36-34 44l6 22-18 7-32-91h6z"/><path fill="none" stroke="#ebebeb" stroke-width="6" d="M1003 273h49q-3 30-32 32z"/></svg></button>
<button class="tile gap"><svg viewBox="30 75 372 372"><path fill="#111" fill-rule="evenodd" d="M153 328l17-11-37-25 43 5-30-53 48 35 21-85 21 85 51-35-31 52 44-4-36 22 15 14zm40-4h47l11-4-12-10 4-18-14 8-14-42-12 42-14-10 2 22-10 6z"/></svg></button>
<button class="tile"><svg viewBox="444 75 372 372"><rect x="562" y="194" width="136" height="135" fill="none" stroke="#c00" stroke-width="18"/></svg></button>
<button class="tile"><svg viewBox="858 75 372 372"><g fill="none" stroke="#000" stroke-width="16"><circle cx="1044" cy="261" r="65"/><circle cx="1044" cy="261" r="31"/><path d="M1044 172v58M1044 292v58M956 261h58M1074 261h59"/></g><circle cx="1044" cy="261" r="8"/></svg></button>
<button class="tile gap"><svg viewBox="132 405 372 372"><circle cx="318" cy="591" r="73" fill="none" stroke="#000" stroke-width="16"/><path d="M285 582h66v17h-66z"/></svg></button>
<button class="tile"><svg viewBox="546 405 372 372"><circle cx="732" cy="591" r="73" fill="none" stroke="#000" stroke-width="16"/><path d="M699 582h25v-24h16v24h25v17h-25v25h-16v-25h-25z"/></svg></button>
</div>
</div>
<div class="vthumb"></div>
<div class="hthumb"></div>

<section class="dialog">
<header>
<button class="tool focus"><svg viewBox="51 69 276 276"><path d="M258 207H122M167 160l-46 47 46 46" fill="none" stroke="#111" stroke-width="8" stroke-linejoin="round" stroke-linecap="round"/></svg></button>
<h1>НАСТРОЙКИ</h1>
<button class="tool"><svg viewBox="864 69 276 276"><path d="M975 252A57 57 0 1 0 953 205M938 180l15 28 28-15" fill="none" stroke="#000" stroke-width="7" stroke-linecap="round" stroke-linejoin="round"/></svg></button>
<button class="tool power"><svg viewBox="1170 69 276 276"><path d="M1308 147v61M1271 174a55 55 0 1 0 74 0" fill="none" stroke="#000" stroke-width="11" stroke-linecap="round"/></svg></button>
</header>
<div class="tabs"><button>Карта</button><button class="on">БСПВР</button><button>Средства</button><button>Связь</button><button>МП</button><button>Данные</button></div>
<div class="panel">
<div class="caption">Заголовок</div>
<div class="row"><label><i class="box"></i>Выбрать все</label><button class="push">Закрыть все</button></div>
<div class="list">
<ul><li><i class="box"></i>M371352.rsw</li><li><i class="box"></i>M371153.rsw</li><li class="dashed-name"><i class="box"></i>L-36-012-2.rsw</li></ul>
<div class="scroll"><span class="sb"><svg viewBox="0 0 18 18"><path d="M4 11l5-5 5 5"/></svg></span><span class="sb"></span><span class="sb end"><svg viewBox="0 0 18 18"><path d="M4 6l5 5 5-5"/></svg></span></div>
</div>
<button class="push wide-btn">Открыть папку со снимками...</button>
<div class="slider-label">Управление прозрачностью</div>
<svg class="slider" viewBox="0 0 919 26"><rect x="1.5" y="8.5" width="916" height="5" rx="2.5" fill="#9db4c6" stroke="#5e8db3"/><path d="M9.5 15v9M159.500 15v9M309.500 15v9M460.500 15v9M610.500 15v9M760.500 15v9M910.500 15v9" stroke="#4b7ba3"/><circle cx="910" cy="11" r="8.500" fill="#ededed" stroke="#979797"/></svg>
<div class="params-label">Параметры снимка</div>
<div class="params"></div>
</div>
</section>
</main>

<footer class="taskbar">
<svg class="ti" width="30" height="32" viewBox="24 636 90 96"><path d="M69 645l11 30 29 2-23 20 8 30-25-17-25 17 8-30-23-20 29-2z" fill="none" stroke="#fff" stroke-width="4"/><path fill="#fff" d="M69 659l8 22 19 2-15 13 5 19-17-12-17 12 5-19-15-13 19-2z"/></svg>
<svg class="ti" width="34" height="30" viewBox="160 640 102 90"><g fill="none" stroke="#fff" stroke-width="5"><path d="M180 698h-8q-8 0-8-8v-45h67q8 0 8 8v14"/><rect x="183" y="671" width="73" height="53" rx="6"/></g><path stroke="#fff" stroke-width="5" stroke-dasharray="6 4" d="M207 654h26M225 681h26"/></svg>
<svg class="ti" width="34" height="30" viewBox="301 640 102 90"><path d="M305 655v-10h25v10h67v69h-92z" fill="none" stroke="#fff" stroke-width="5"/><path d="M330 690q21-20 42 0-21 20-42 0zM351 669v6M335 674l5 6M367 674l-5 6" fill="none" stroke="#fff" stroke-width="4"/><circle cx="351" cy="690" r="7" fill="none" stroke="#fff" stroke-width="4"/></svg>
<i class="sep"></i>
<div class="task"><svg width="32" height="24" viewBox="474 650 96 72"><path d="M503 655l12 6h16l11-6v22l14 1q10 5 12 20-12-4-16 4-12-4-17 14l-12-6-12 6q-6-16-17-12-6-10-18-6 6-16 16-20l12 4z"/><path stroke="#8fabc2" stroke-width="3" fill="none" d="M503 673q20-14 38 0M510 678q12-8 24 0M520 686v16q3 5 5 0v-16"/></svg><span>МУР</span></div>
<div class="tray">
<svg width="26" height="30" viewBox="332 880 78 90"><path d="M338 909h14l30-22v74l-30-22h-14zM390 910q14 14 0 28" fill="none" stroke="#fff" stroke-width="5"/></svg>
<svg width="34" height="32" viewBox="447 876 102 96"><g fill="none" stroke="#fff" stroke-width="5"><path d="M478 918h-25v-37h62v30M483 918h60v40h-60zM500 966h28M513 958v8M455 934v15h18M466 942l8 7-8 7M468 928h7v10"/><path d="M505 934l8 8 12-14"/></g></svg>
<svg width="32" height="32" viewBox="570 873 96 96"><g fill="none" stroke="#fff" stroke-width="5"><path d="M638 891h-54q-8 0-8 8v48q0 8 8 8h50l8 8v-8h4q9 0 9-8v-40M585 905h48M585 920h60M585 935h60"/></g><circle cx="648" cy="891" r="14" fill="#f14a4a"/></svg>
<span class="lang">en</span><i class="sep"></i>
<div class="time"><b>11:15</b><small>СР, 13 МАР</small></div>
</div>
</footer>
</body>
</html>
```
FILE: styles.css
```css
*{box-sizing:border-box}
body{margin:0;width:1918px;height:992px;overflow:hidden;background:#ebebeb;color:#000;font:800 18.67px/26px "Noto Sans","Open Sans",sans-serif;display:flex;flex-direction:column}
button{margin:0;padding:0;font:inherit;color:inherit;background:#ebebeb;border:2px solid #000;border-radius:0;display:block}
svg{display:block}
h1,h2,dl,dd,ul{margin:0;padding:0;font-weight:800}
.window{position:relative;flex:none;width:1917px;height:942px;margin:1px 0 1px 1px;background:#fff;border:1px solid #aaa;border-radius:4px}
.viewport{position:relative;width:1894px;height:920px;overflow:hidden;border-right:1px solid #ddd;border-bottom:1px solid #ddd}
.map{position:absolute;left:0;top:0;width:1893px;height:919px}
.wood{fill:#a0f0a0}
.water{fill:#a0e8ff}.pale{fill:#c9e4fb}
.river{fill:none;stroke:#9dbcf8;stroke-width:5}
.main{stroke:#92c8fb;stroke-width:8}
.contour,.c2{fill:none;stroke:#ebcdb0;stroke-width:4}.c2{stroke-width:1}
.road{fill:none;stroke:#a0a0a0;stroke-width:4;stroke-dasharray:60 2}
.wide{stroke:#b4b4b4;stroke-width:8;stroke-dasharray:22 4}
.dark{stroke:#888;stroke-width:8}
.r2{fill:none;stroke:#a0a0a0;stroke-width:.9}
.track{fill:none;stroke:#e0bc98;stroke-width:5}.t2{fill:none;stroke:#e0bc98;stroke-width:1.200}
.ticks{fill:none;stroke:#c0c0c0;stroke-width:12;stroke-dasharray:3 6}.k2{fill:none;stroke:#b8b8b8;stroke-width:3;stroke-dasharray:1 1.500}
.thin{fill:none;stroke:#999;stroke-width:3}
.dots{fill:none;stroke:#7a7a7a;stroke-width:3.500;stroke-dasharray:3.500 14.500}
.d2{fill:none;stroke:#888;stroke-width:.9;stroke-dasharray:.9 4.900}
.town{fill:#8d8d8d;font-family:"Liberation Sans",sans-serif;font-weight:400}
.note{fill:#a8a8a8;font:italic 400 20px "Liberation Serif",serif}
.district{fill:#333;font-family:"Liberation Sans",sans-serif;font-weight:400}
.tile{width:128px;height:128px;flex:none}
.tile svg{width:124px;height:124px}
.tile-off{border:2px dotted #808080}
.units{position:absolute;left:18px;top:8px;height:904px;overflow:hidden;display:flex;flex-direction:column;justify-content:flex-end;gap:6px}
.units svg{fill:#111}
.units .cut{fill:none;stroke:#ebebeb;stroke-width:3}
.wheels{fill:#111;stroke:#ebebeb;stroke-width:12}
.rims{fill:#ebebeb;stroke:#111;stroke-width:15}
.small{stroke-width:11}
.status{position:absolute;left:1183px;top:28px;display:flex}
.link{width:58px;height:58px;margin-top:14px;background:#008000;border:3px solid #000}
.clock{width:240px;margin-left:48px;margin-top:-1px;display:flex;flex-direction:column;align-items:center;font-size:33.300px;line-height:40px;font-weight:850}
.clock-date{letter-spacing:1.1px}
.clock-time{letter-spacing:-.3px}
.tools{position:absolute;left:1558px;top:23px;display:flex;gap:10px}
.tool{width:96px;height:96px;flex:none}
.tool svg{width:92px;height:92px}
.tool-active{background:#c8c8c8;border-style:dashed}
.object{position:absolute;left:1390px;top:130px;width:476px;height:537px;background:rgba(235,235,235,.63);border:1px solid #bbb;border-radius:4px}
.object h2{font-size:18.670px;line-height:30px;height:31px;padding-top:1px;text-align:center;letter-spacing:.4px}
.object dl{display:grid;grid-template-columns:84px 383px;grid-auto-rows:56px;font-size:33.300px;line-height:61px}
.object dt{text-align:center}
.object dd{text-align:center;border-bottom:2px solid #000;letter-spacing:.9px}
.object dd:nth-of-type(2){letter-spacing:.5px}
.pair{display:grid;grid-template-columns:81px 174px 38px 174px;grid-template-rows:56px;height:56px;font-size:33.300px;line-height:61px;text-align:center}
.field{height:56px;border-bottom:2px solid #000}
.actions{display:flex;margin:34px 0 0 14px}
.actions .tile+.tile{margin-left:37px}
.actions .tile+.tile+.tile{margin-left:17px}
.bottom{position:absolute;left:732px;top:791px;display:flex;gap:10px}
.bottom .gap{margin-left:20px}
.vthumb,.hthumb{position:absolute;background:#bcbcbc;border:1px solid #8e8e8e;border-radius:4px}
.vthumb{left:1900px;top:788px;width:8px;height:58px}
.hthumb{left:248px;top:926px;width:189px;height:8px}
.dialog{position:absolute;left:463px;top:99px;width:969px;height:730px;background:#ebebeb;border:2px solid #000;padding:8px}
.dialog header{display:flex;gap:6px}
.dialog h1{flex:1;text-align:center;font-size:33.300px;line-height:96px;padding-left:1px;letter-spacing:1px}
.focus{box-shadow:0 0 1px #6c92b0}
.power{background:#f00}
.tabs{display:flex;margin:6px 0 0 12px;height:77px}
.tabs button{width:154px;height:77px;border-bottom:0;font-size:26.670px;letter-spacing:.5px}
.tabs .on{width:158px;margin:0 -2px;background:#000;color:#fff;z-index:1;position:relative}
.panel{width:949px;height:531px;border:2px solid #000;padding:10px 13px;display:flex;flex-direction:column}
.caption{width:455px;height:28px;line-height:28px;text-align:center;letter-spacing:.35px}
.row{display:flex;justify-content:space-between;margin-top:4px;height:37px}
.row label{display:flex;align-items:center;gap:6px;padding-left:1px;letter-spacing:.25px}
.box{width:16px;height:16px;flex:none;border:1px solid #a0a0a0;border-radius:2px;background:#ededed}
.row .box{margin-top:-2px}
.push{width:455px;height:37px;border:1px solid #a8a8a8;border-radius:3px;background:linear-gradient(#ededed 40%,#e2e2e2);box-shadow:0 1px 1px #ccc}
.list{display:flex;margin-top:8px;width:919px;height:89px;background:#fff;border:1px solid #aaa;border-radius:2px}
.list ul{flex:1;list-style:none}
.list li{display:flex;gap:8px;height:29px;line-height:18px;padding:6px 0 0 5px;letter-spacing:.1px}
.list .dashed-name{letter-spacing:1.05px}
.scroll{width:21px;display:flex;flex-direction:column;background:#e8e8e8}
.sb{width:21px;height:21px;background:#ebebeb;border:1px solid #f8f8f8;border-right:2px solid #555;border-bottom:2px solid #555}
.sb.end{margin-top:auto}
.sb svg{width:18px;height:18px;fill:none;stroke:#222}
.wide-btn{width:919px;height:38px;margin-top:8px}
.slider-label{margin-top:5px;height:26px;flex:none;letter-spacing:.3px}
.slider{width:919px;height:26px;margin-top:3px}
.params-label{text-align:center;margin-top:3px;height:26px}
.params{height:199px;margin-top:5px;flex:none;border:1px solid #aaa;border-radius:3px}
.taskbar{height:48px;flex:none;background:#4d7494;display:flex;align-items:center;color:#fff}
.taskbar .ti{flex:none}
.taskbar .ti:first-child{margin-left:8px}
.ti+.ti{margin-left:15px}
.ti+.ti+.ti{margin-left:13px}
.sep{width:1px;height:39px;background:#8fabc2;flex:none}
.ti+.sep{margin-left:9px}
.task{width:170px;height:48px;margin-left:10px;padding-left:4px;background:#8fabc2;display:flex;align-items:center;color:#000;font:700 13.300px "Open Sans","Noto Sans",sans-serif}
.task span{margin-left:2px}
.tray{margin-left:auto;display:flex;align-items:center;height:48px;border-right:5px solid #8fabc2}
.tray svg+svg{margin-left:12px}
.tray svg+svg+svg{margin-left:7px}
.lang{width:32px;height:32px;margin-left:6px;border:1px solid #8fabc2;border-radius:4px;text-align:center;font:400 17px/27px "Noto Sans",sans-serif}
.lang+.sep{margin-left:9px}
.time{width:83px;display:flex;flex-direction:column;align-items:center;font-family:"Noto Sans",sans-serif}
.time b{font-weight:400;font-size:18.670px;line-height:17px}
.time small{font-size:12.600px;font-weight:400;line-height:15px}
```
